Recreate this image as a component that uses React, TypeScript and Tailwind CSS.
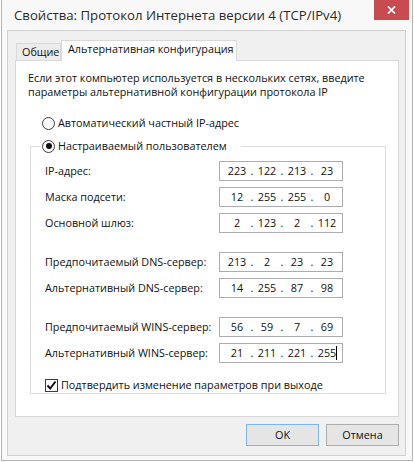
import React from "react";

const UI_FONT = "font-['Open_Sans','Liberation_Sans',sans-serif]";

type Row = { label: string; octets: string[]; caret?: boolean };

const addressRows: Row[] = [
  { label: "IP-адрес:", octets: ["223", "122", "213", "23"] },
  { label: "Маска подсети:", octets: ["12", "255", "255", "0"] },
  { label: "Основной шлюз:", octets: ["2", "123", "2", "112"] },
];

const dnsRows: Row[] = [
  { label: "Предпочитаемый DNS-сервер:", octets: ["213", "2", "23", "23"] },
  { label: "Альтернативный DNS-сервер:", octets: ["14", "255", "87", "98"] },
];

const winsRows: Row[] = [
  { label: "Предпочитаемый WINS-сервер:", octets: ["56", "59", "7", "69"] },
  { label: "Альтернативный WINS-сервер:", octets: ["21", "211", "221", "255"], caret: true },
];

function IpField({ octets, caret }: { octets: string[]; caret?: boolean }) {
  return (
    <div className="w-[124px] h-[20px] border border-[#abadb3] bg-white flex items-center pl-[5px]">
      {octets.map((o, i) => (
        <React.Fragment key={i}>
          <span className="relative w-[24px] h-[18px] leading-[18px] text-center">
            {o}
            {caret && i === octets.length - 1 && (
              <span className="absolute left-[21px] top-[2px] w-px h-[14px] bg-black" />
            )}
          </span>
          {i < octets.length - 1 && (
            <span className="w-[6px] h-[18px] leading-[18px] text-center">.</span>
          )}
        </React.Fragment>
      ))}
    </div>
  );
}

function FieldRow({ row, className = "" }: { row: Row; className?: string }) {
  return (
    <div className={`flex items-center h-[20px] ${className}`}>
      <span className="w-[174px] whitespace-nowrap">{row.label}</span>
      <IpField octets={row.octets} caret={row.caret} />
    </div>
  );
}

function Radio({ checked }: { checked?: boolean }) {
  return (
    <span className="w-[13px] h-[13px] rounded-full border border-[#3c3c3c] bg-white flex items-center justify-center shrink-0">
      {checked && <span className="w-[6px] h-[6px] rounded-full bg-[#111]" />}
    </span>
  );
}

export default function App() {
  return (
    <div className={`w-[414px] h-[462px] bg-white text-[10.8px] text-[#111] ${UI_FONT}`}>
      <div className="ml-px w-[412px] h-[461px] border-x border-b border-[#b4b4b4] bg-[#f8f8f8] flex flex-col">
        {/* Title bar */}
        <div className="h-[30px] flex">
          <div className="flex-1 pl-[12px] self-center whitespace-nowrap text-[13.2px] text-[#2a2a2a] leading-[20px] -mt-[1px]">
            Свойства: Протокол Интернета версии 4 (TCP/IPv4)
          </div>
          <button className="w-[35px] h-[20px] mr-[3px] bg-[#c74b50] flex items-center justify-center">
            <svg width="9" height="8" viewBox="0 0 9 8">
              <path d="M1 0.5 L8 7.5 M8 0.5 L1 7.5" stroke="white" strokeWidth="1.7" />
            </svg>
          </button>
        </div>

        {/* Client area */}
        <div className="ml-[5px] w-[399px] h-[426px] border border-[#d0d0d0] bg-[#f0f0f0] flex flex-col">
          {/* Tabs */}
          <div className="flex items-end pl-[8px] mt-[9px]">
            <div className="w-[45px] h-[17px] border border-b-0 border-[#d9d9d9] bg-[#ececec] pl-[5px] leading-[15px] whitespace-nowrap">
              Общие
            </div>
            <div className="relative z-10 w-[176px] h-[21px] -mb-px border border-b-0 border-[#d9d9d9] bg-white pl-[6px] leading-[15px] whitespace-nowrap">
              Альтернативная конфигурация
            </div>
          </div>

          {/* Tab page */}
          <div className="ml-[7px] w-[384px] h-[357px] border border-[#d9d9d9] bg-white flex flex-col">
            <p className="pl-[12px] pt-[10px] leading-[14px] whitespace-nowrap">
              Если этот компьютер используется в нескольких сетях, введите
              <br />
              параметры альтернативной конфигурации протокола IP
            </p>

            <label className="flex items-center h-[16px] mt-[16px] pl-[26px]">
              <Radio />
              <span className="ml-[3px]">Автоматический частный IP-адрес</span>
            </label>

            <fieldset className="ml-[14px] mt-[7px] w-[356px] border border-[#dcdcdc] px-[9px] pb-[1px]">
              <legend className="px-[2px] pr-[14px]">
                <span className="flex items-center h-[16px]">
                  <Radio checked />
                  <span className="ml-[3px]">Настраиваемый пользователем</span>
                </span>
              </legend>

              <div className="pl-[5px] flex flex-col">
                {addressRows.map((r, i) => (
                  <FieldRow key={r.label} row={r} className={i === 0 ? "mt-[7px]" : "mt-[6px]"} />
                ))}
                {dnsRows.map((r, i) => (
                  <FieldRow key={r.label} row={r} className={i === 0 ? "mt-[19px]" : "mt-[6px]"} />
                ))}
                {winsRows.map((r, i) => (
                  <FieldRow key={r.label} row={r} className={i === 0 ? "mt-[19px]" : "mt-[6px]"} />
                ))}

                <label className="flex items-center h-[13px] mt-[16px]">
                  <span className="w-[13px] h-[13px] border border-[#3c3c3c] bg-white flex items-center justify-center shrink-0">
                    <svg width="11" height="11" viewBox="0 0 11 11">
                      <path d="M1.5 5.5 L4.2 8.5 L9.5 1.5" fill="none" stroke="#111" strokeWidth="2" />
                    </svg>
                  </span>
                  <span className="ml-[3px] whitespace-nowrap">Подтвердить изменение параметров при выходе</span>
                </label>
              </div>
            </fieldset>
          </div>

          {/* Buttons */}
          <div className="flex justify-end gap-[7px] pr-[6px] mt-[7px]">
            <button className="w-[73px] h-[22px] border border-[#7eb4ea] bg-[#e5e5e5]">
              OK
            </button>
            <button className="w-[73px] h-[22px] border border-[#adadad] bg-[#e5e5e5]">
              Отмена
            </button>
          </div>
        </div>
      </div>
    </div>
  );
}
